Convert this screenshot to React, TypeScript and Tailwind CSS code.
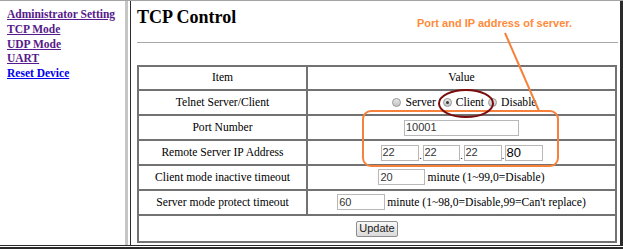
import React from "react"

const serif = "font-['Liberation_Serif','Times_New_Roman',serif]"
const sans = "font-['Liberation_Sans',Arial,sans-serif]"

function Radio({ checked }: { checked?: boolean }) {
  return (
    <span className="relative inline-block w-[9px] h-[9px] rounded-full border border-[#9a9a9a] bg-gradient-to-b from-[#e8e8e8] to-[#c4c4c4]">
      {checked && (
        <span className="absolute left-[2px] top-[2px] w-[3px] h-[3px] rounded-full bg-[#3a3a3a]" />
      )}
    </span>
  )
}

function Field({ value, w, big }: { value: string; w: string; big?: boolean }) {
  return (
    <span
      className={`inline-flex items-center h-[16px] ${w} border border-[#b8b8b8] bg-white pl-[1px] ${sans} ${
        big ? "text-[13px] text-black" : "text-[11px] text-[#333]"
      }`}
    >
      {value}
    </span>
  )
}

const links = [
  { label: "Administrator Setting", visited: true },
  { label: "TCP Mode", visited: true },
  { label: "UDP Mode", visited: true },
  { label: "UART", visited: true },
  { label: "Reset Device", visited: false },
]

export default function App() {
  const cell = "border-2 border-[#727272] text-center p-0"
  return (
    <div className="relative w-[623px] h-[249px] bg-white overflow-hidden flex flex-col">
      <div className="flex h-[245px] border-t border-[#a4a4a4]">
        {/* menu */}
        <div className={`w-[125px] pl-[7px] pt-[6px] flex flex-col ${serif} text-[11.5px] font-bold leading-[14.8px]`}>
          {links.map((l) => (
            <a
              key={l.label}
              href="#"
              className={`underline whitespace-nowrap ${l.visited ? "text-[#551a8b]" : "text-[#0000ee]"}`}
            >
              {l.label}
            </a>
          ))}
        </div>
        <div className="w-[3px] bg-[#c6c6c6]" />
        <div className="w-[2px]" />
        <div className="w-px bg-[#2e2e2e]" />

        {/* main */}
        <div className="flex-1 pl-[6px] pr-[2px] border-r-[3px] border-[#2a2a2a]">
          <h1 className={`${serif} text-[18px] font-bold leading-[20px] mt-[6px] text-black`}>TCP Control</h1>
          <div className="mt-[15px] h-px bg-[#a8a8a8]" />
          <table className={`mt-[22px] w-[480px] border-collapse ${serif} text-[11.6px] text-black`}>
            <tbody>
              <tr className="h-[24px]">
                <td className={`${cell} w-[169px]`}>Item</td>
                <td className={cell}>Value</td>
              </tr>
              <tr className="h-[25px]">
                <td className={cell}>Telnet Server/Client</td>
                <td className={cell}>
                  <div className="flex items-center justify-center pl-[6px]">
                    <Radio />
                    <span className="ml-[4px] mr-[7px]">Server</span>
                    <Radio checked />
                    <span className="ml-[4px] mr-[4px]">Client</span>
                    <Radio />
                    <span className="ml-[4px]">Disable</span>
                  </div>
                </td>
              </tr>
              <tr className="h-[25px]">
                <td className={cell}>Port Number</td>
                <td className={cell}>
                  <div className="flex justify-center">
                    <Field value="10001" w="w-[115px]" />
                  </div>
                </td>
              </tr>
              <tr className="h-[25px]">
                <td className={cell}>Remote Server IP Address</td>
                <td className={cell}>
                  <div className="flex items-end justify-center">
                    <Field value="22" w="w-[38px]" />
                    <span className="w-[4px] text-[10px] leading-[10px]">.</span>
                    <Field value="22" w="w-[37px]" />
                    <span className="w-[4px] text-[10px] leading-[10px]">.</span>
                    <Field value="22" w="w-[38px]" />
                    <span className="w-[3px] text-[10px] leading-[10px]">.</span>
                    <Field value="80" w="w-[38px]" big />
                  </div>
                </td>
              </tr>
              <tr className="h-[25px]">
                <td className={cell}>Client mode inactive timeout</td>
                <td className={cell}>
                  <div className="flex items-center justify-center">
                    <Field value="20" w="w-[47px]" />
                    <span className="ml-[2px]">minute (1~99,0=Disable)</span>
                  </div>
                </td>
              </tr>
              <tr className="h-[25px]">
                <td className={cell}>Server mode protect timeout</td>
                <td className={cell}>
                  <div className="flex items-center justify-center">
                    <Field value="60" w="w-[48px]" />
                    <span className="ml-[2px]">minute (1~98,0=Disable,99=Can't replace)</span>
                  </div>
                </td>
              </tr>
              <tr className="h-[27px]">
                <td className={cell} colSpan={2}>
                  <div className="flex justify-center">
                    <button
                      className={`h-[16px] w-[42px] rounded-[2px] border border-[#8e8e8e] bg-gradient-to-b from-[#f8f8f8] to-[#dadada] ${sans} text-[11px] leading-none text-[#222]`}
                    >
                      Update
                    </button>
                  </div>
                </td>
              </tr>
            </tbody>
          </table>
        </div>
      </div>
      <div className="h-px bg-[#2a2a2a]" />
      <div className="h-px" />
      <div className="h-[2px] bg-[#2a2a2a]" />

      {/* annotation overlay */}
      <span className={`absolute left-[417px] top-[16px] ${sans} text-[11px] font-bold leading-[14px] text-[#ff8a3a] whitespace-nowrap`}>
        Port and IP address of server.
      </span>
      <svg className="absolute left-0 top-0 pointer-events-none" width="623" height="249">
        <line x1="505" y1="33" x2="539" y2="111" stroke="#f7813a" strokeWidth="2" />
        <rect x="363" y="111" width="195" height="55" rx="8" fill="none" stroke="#f7813a" strokeWidth="2" />
        <ellipse cx="466" cy="103.5" rx="27" ry="13.5" fill="none" stroke="#7a0c0c" strokeWidth="2" />
      </svg>
    </div>
  )
}
